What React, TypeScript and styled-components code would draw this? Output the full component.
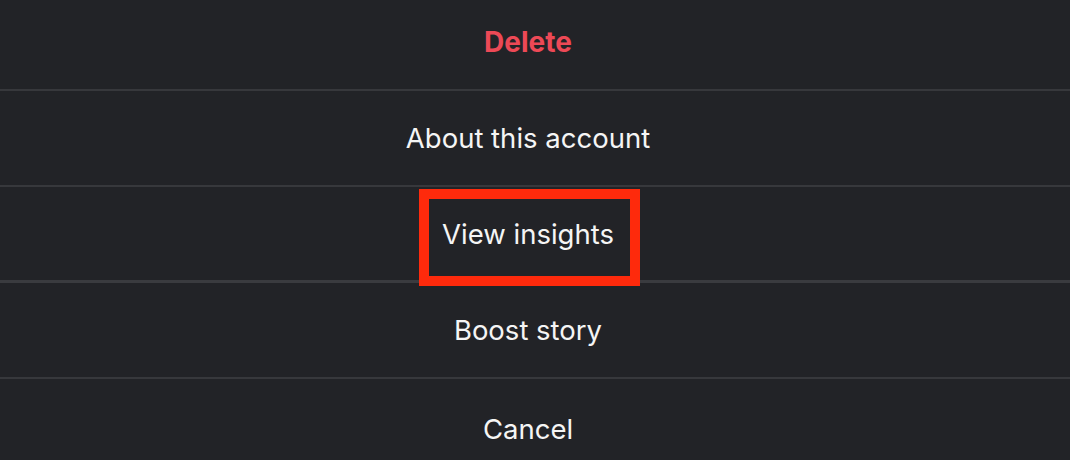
import styled, { createGlobalStyle } from 'styled-components'

const GlobalStyle = createGlobalStyle`
  html, body {
    margin: 0;
    padding: 0;
    background: #222327;
  }
  body {
    font-family: Inter, "Noto Sans", sans-serif;
    -webkit-font-smoothing: antialiased;
  }
`

type Action = {
  label: string
  danger?: boolean
  highlighted?: boolean
  heavyTop?: boolean
}

const actions: Action[] = [
  { label: 'Delete', danger: true },
  { label: 'About this account' },
  { label: 'View insights', highlighted: true },
  { label: 'Boost story', heavyTop: true },
  { label: 'Cancel' },
]

function App() {
  return (
    <>
      <GlobalStyle />
      <Sheet>
        {actions.map((action, i) => (
          <Row key={action.label} $first={i === 0} $heavy={action.heavyTop} $last={i === actions.length - 1}>
            <Label $danger={action.danger}>{action.label}</Label>
            {action.highlighted && <Highlight />}
          </Row>
        ))}
      </Sheet>
    </>
  )
}

const Sheet = styled.div`
  width: 1070px;
  height: 460px;
  overflow: hidden;
  display: flex;
  flex-direction: column;
  background: #222327;
`

const Row = styled.div<{ $first?: boolean; $heavy?: boolean; $last?: boolean }>`
  position: relative;
  flex: none;
  display: flex;
  align-items: center;
  justify-content: center;
  box-sizing: content-box;
  padding-right: 14px;
  height: ${p => (p.$first ? '84px' : '94px')};
  padding-bottom: ${p => (p.$first ? '5px' : '0')};
  padding-top: ${p => (p.$last ? '3px' : '0')};
  border-top: ${p => (p.$first ? 'none' : p.$heavy ? '3px solid #3a3b3f' : '2px solid #37383c')};
  margin-top: ${p => (p.$heavy ? '-1px' : '0')};
`

const Label = styled.span<{ $danger?: boolean }>`
  font-size: ${p => (p.$danger ? '28px' : '27.5px')};
  line-height: 32px;
  font-weight: ${p => (p.$danger ? 700 : 400)};
  color: ${p => (p.$danger ? '#ed4956' : '#f5f5f5')};
  letter-spacing: 0;
`

const Highlight = styled.div`
  position: absolute;
  top: 2px;
  left: calc(50% - 116px);
  width: 221px;
  height: 97px;
  box-sizing: border-box;
  border: 10px solid #fe2a0c;
  z-index: 2;
  pointer-events: none;
`

export default App
